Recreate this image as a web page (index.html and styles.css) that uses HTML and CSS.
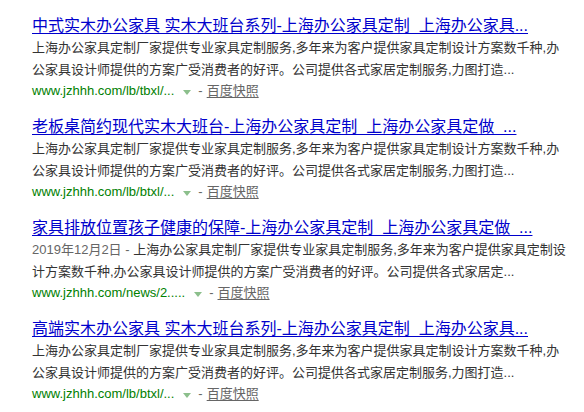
FILE: index.html
```html
<!DOCTYPE html>
<html lang="zh-CN">
<head>
<meta charset="utf-8">
<title>搜索结果</title>
<link rel="stylesheet" href="styles.css">
</head>
<body>
<div class="results">
  <div class="result">
    <h3 class="title"><a href="#">中式实木办公家具 实木大班台系列-上海办公家具定制&nbsp;&nbsp;上海办公家具...</a></h3>
    <div class="abstract">上海办公家具定制厂家提供专业家具定制服务,多年来为客户提供家具定制设计方案数千种,办公家具设计师提供的方案广受消费者的好评。公司提供各式家居定制服务,力图打造...</div>
    <div class="meta"><span class="url">www.jzhhh.com/lb/tbxl/...</span><span class="arrow"></span><span class="dash">-</span><a class="cache" href="#">百度快照</a></div>
  </div>
  <div class="result">
    <h3 class="title"><a href="#">老板桌简约现代实木大班台-上海办公家具定制&nbsp;&nbsp;上海办公家具定做&nbsp;&nbsp;...</a></h3>
    <div class="abstract">上海办公家具定制厂家提供专业家具定制服务,多年来为客户提供家具定制设计方案数千种,办公家具设计师提供的方案广受消费者的好评。公司提供各式家居定制服务,力图打造...</div>
    <div class="meta"><span class="url">www.jzhhh.com/lb/btxl/...</span><span class="arrow"></span><span class="dash">-</span><a class="cache" href="#">百度快照</a></div>
  </div>
  <div class="result">
    <h3 class="title"><a href="#">家具排放位置孩子健康的保障-上海办公家具定制&nbsp;&nbsp;上海办公家具定做&nbsp;&nbsp;...</a></h3>
    <div class="abstract"><span class="date">2019年12月2日 - </span>上海办公家具定制厂家提供专业家具定制服务,多年来为客户提供家具定制设计方案数千种,办公家具设计师提供的方案广受消费者的好评。公司提供各式家居定...</div>
    <div class="meta"><span class="url">www.jzhhh.com/news/2.....</span><span class="arrow"></span><span class="dash">-</span><a class="cache" href="#">百度快照</a></div>
  </div>
  <div class="result">
    <h3 class="title"><a href="#">高端实木办公家具 实木大班台系列-上海办公家具定制&nbsp;&nbsp;上海办公家具...</a></h3>
    <div class="abstract">上海办公家具定制厂家提供专业家具定制服务,多年来为客户提供家具定制设计方案数千种,办公家具设计师提供的方案广受消费者的好评。公司提供各式家居定制服务,力图打造...</div>
    <div class="meta"><span class="url">www.jzhhh.com/lb/btxl/...</span><span class="arrow"></span><span class="dash">-</span><a class="cache" href="#">百度快照</a></div>
  </div>
</div>
</body>
</html>
```

FILE: styles.css
```css
html, body {
  margin: 0;
  padding: 0;
  background: #fff;
}
body {
  font-family: Arial, "Liberation Sans", "Noto Sans CJK SC", sans-serif;
  color: #333;
}
.results {
  padding: 15px 0 0 32px;
  width: 540px;
  display: flex;
  flex-direction: column;
  gap: 15px;
}
.title {
  margin: 0;
  font-size: 16px;
  font-weight: normal;
  line-height: 22px;
  white-space: nowrap;
}
.title a {
  color: #0000cc;
  text-decoration: underline;
  text-underline-offset: 2px;
}
.abstract {
  font-size: 13px;
  line-height: 22px;
  color: #333;
  word-break: break-all;
}
.date {
  color: #666;
}
.meta {
  font-size: 13px;
  line-height: 20px;
  display: flex;
  align-items: center;
  white-space: nowrap;
}
.url {
  color: #008000;
}
.arrow {
  width: 0;
  height: 0;
  border-left: 4px solid transparent;
  border-right: 4px solid transparent;
  border-top: 5px solid #8cbf8c;
  margin: 2px 7px 0 9px;
}
.dash {
  color: #666;
  margin-right: 4px;
}
.cache {
  color: #666;
  text-decoration: underline;
  text-underline-offset: 2px;
}
```
